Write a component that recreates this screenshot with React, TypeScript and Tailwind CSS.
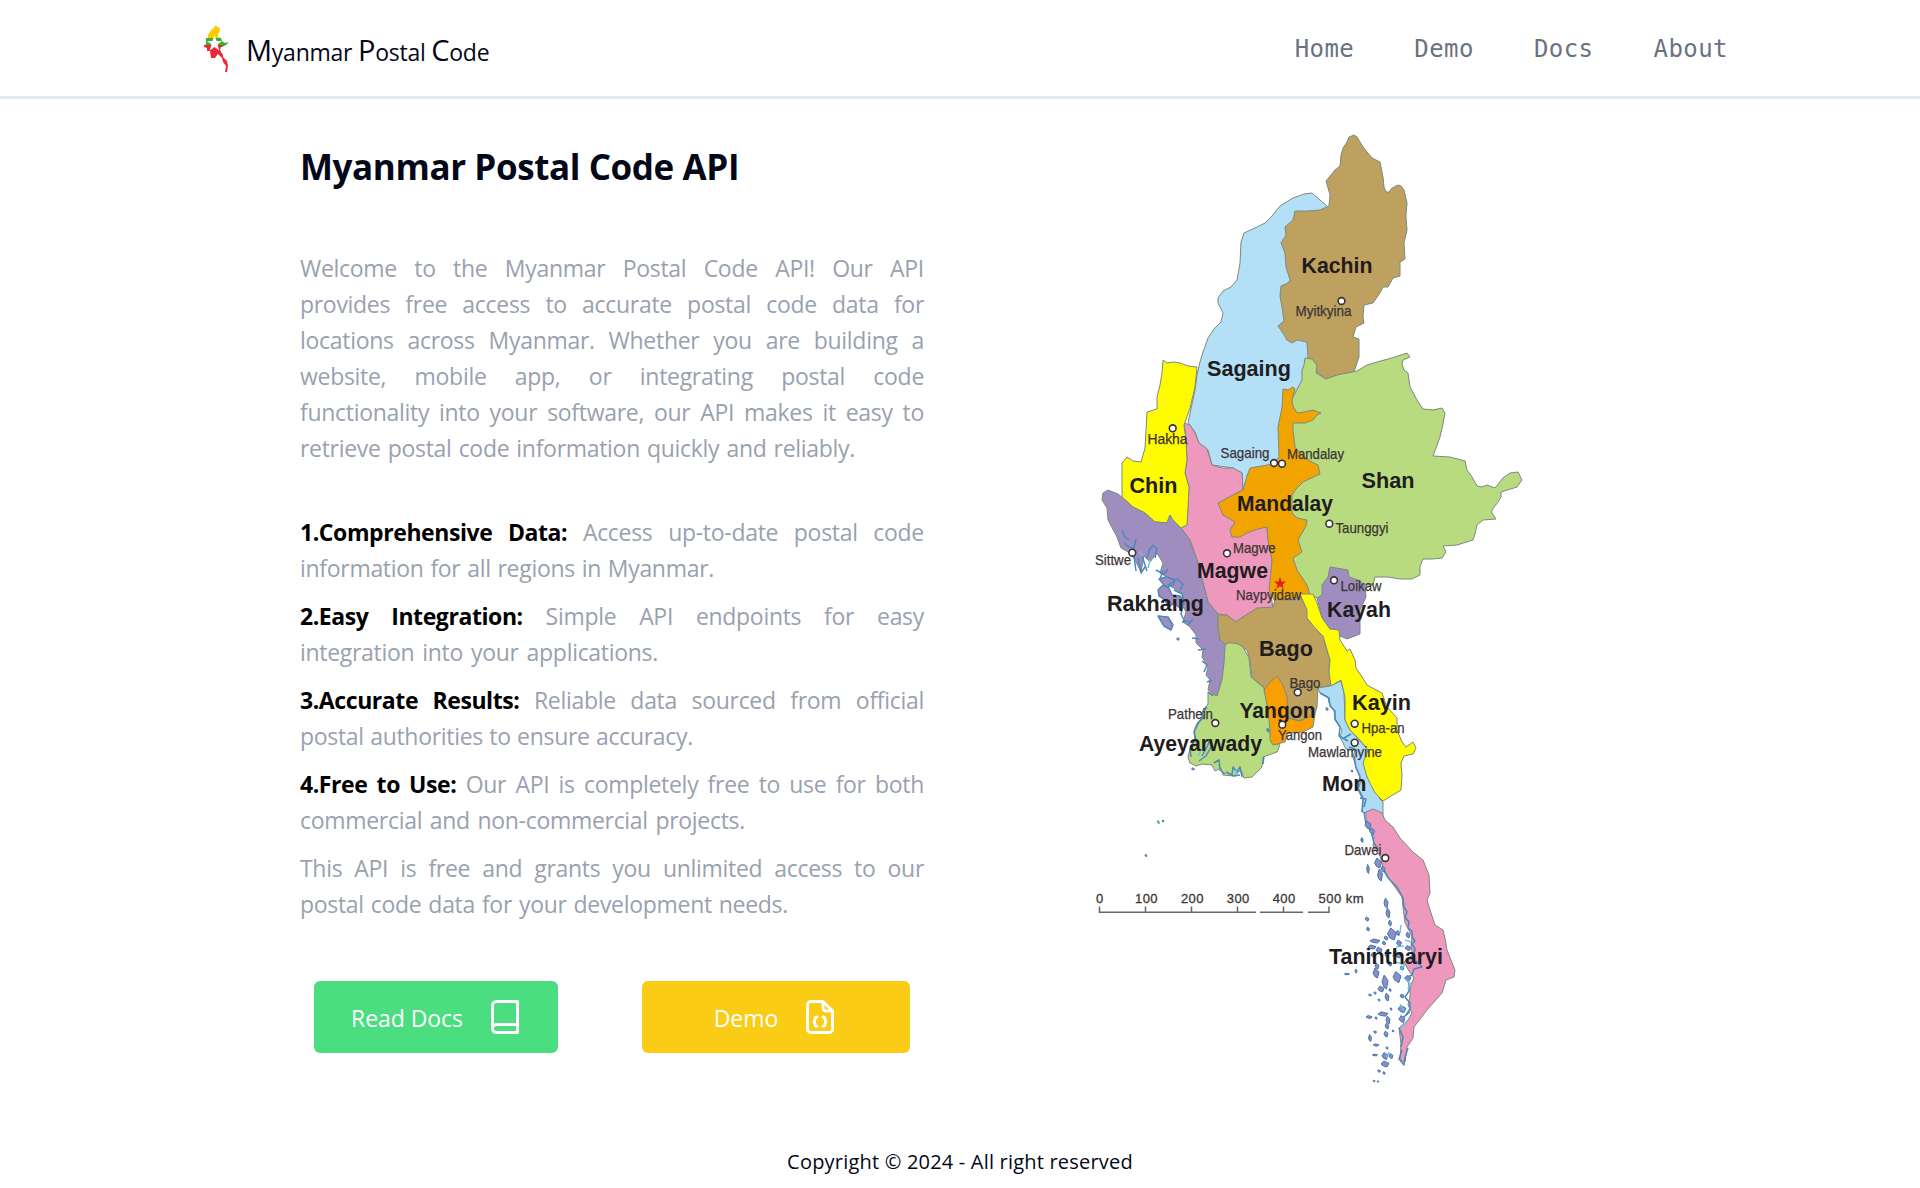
import { type ReactNode } from 'react';

const regions = [
  { name: 'Sagaing', fill: '#b3dff7', points: '1328,207 1320,200 1312,193 1304,194 1293,198 1280,206 1272,216 1265,223 1255,228 1244,233 1241,242 1240,263 1237,280 1231,287 1223,291 1218,298 1218,303 1223,313 1221,322 1214,329 1208,338 1203,352 1200,362 1197,375 1195,390 1188,423 1195,432 1199,443 1208,450 1212,465 1233,468 1242,473 1243,490 1250,480 1270,475 1290,460 1300,400 1320,370 1320,340 1320,212' },
  { name: 'Kachin', fill: '#bea15e', points: '1354,135 1349,137 1347,142 1343,148 1341,155 1340,166 1335,170 1326,181 1328,188 1330,195 1329,206 1320,210 1308,211 1295,211 1293,220 1285,227 1286,235 1281,243 1285,253 1286,267 1290,280 1288,283 1281,286 1280,296 1282,307 1284,321 1278,326 1283,333 1287,340 1292,343 1297,340 1307,342 1308,358 1315,362 1317,372 1326,379 1337,376 1354,372 1359,357 1359,339 1353,337 1356,327 1364,323 1363,317 1364,305 1373,303 1380,293 1383,287 1388,287 1393,278 1400,276 1400,262 1405,259 1404,243 1407,230 1406,216 1407,203 1404,190 1401,186 1398,185 1392,188 1389,192 1386,192 1384,187 1383,177 1380,162 1372,158 1363,147 1357,137' },
  { name: 'Shan', fill: '#b8db80', points: '1305,358 1312,359 1317,365 1316,373 1326,379 1337,375 1357,371 1367,365 1377,362 1395,357 1407,353 1410,357 1403,360 1402,364 1404,370 1408,373 1410,387 1417,400 1423,409 1433,410 1442,408 1445,413 1443,424 1440,437 1433,456 1450,457 1465,461 1467,470 1472,477 1477,486 1482,487 1487,485 1495,488 1503,478 1510,473 1518,472 1522,480 1517,487 1501,492 1501,497 1498,502 1492,510 1492,513 1496,519 1483,520 1477,525 1475,534 1473,540 1457,545 1443,546 1446,552 1442,558 1433,559 1423,559 1420,566 1420,575 1412,579 1400,579 1388,577 1375,577 1373,585 1365,585 1340,590 1318,598 1310,595 1292,570 1288,500 1288,410 1293,397 1302,380 1302,370 1304,365' },
  { name: 'Magwe', fill: '#ee98bd', points: '1184,423 1190,425 1195,433 1199,443 1207,449 1212,465 1222,468 1233,468 1242,473 1243,490 1233,495 1225,502 1245,518 1262,520 1267,527 1268,540 1272,560 1270,587 1273,609 1257,610 1243,617 1236,622 1227,615 1218,614 1208,602 1205,590 1203,583 1197,560 1190,540 1181,528 1187,525 1189,487 1185,473 1187,460 1186,440' },
  { name: 'Mandalay', fill: '#f1a400', points: '1283,389 1288,390 1293,387 1295,389 1292,400 1293,406 1297,413 1304,412 1313,410 1321,413 1317,415 1313,420 1305,423 1293,423 1293,430 1295,447 1302,455 1310,461 1318,465 1320,474 1303,482 1296,489 1292,495 1292,513 1297,518 1307,520 1306,526 1302,533 1298,540 1302,552 1293,558 1297,570 1307,585 1310,595 1300,599 1275,602 1269,590 1272,560 1268,540 1267,527 1258,529 1247,533 1240,537 1232,537 1230,530 1235,522 1223,515 1218,503 1233,495 1243,490 1247,476 1250,468 1273,464 1279,457 1278,427 1282,407' },
  { name: 'Chin', fill: '#fffb00', points: '1163,360 1167,363 1174,362 1180,363 1188,366 1197,367 1195,387 1190,408 1184,425 1186,440 1187,460 1185,473 1189,487 1188,508 1187,525 1181,528 1173,522 1170,515 1167,523 1155,522 1145,513 1133,507 1122,497 1122,463 1127,457 1133,461 1141,462 1145,448 1147,412 1157,409 1157,397 1160,385 1162,373' },
  { name: 'Rakhaing', fill: '#9f8dc0', points: '1108,490 1118,494 1123,498 1133,507 1145,513 1155,522 1167,523 1170,515 1173,520 1181,528 1190,540 1197,560 1203,583 1208,602 1218,614 1218,630 1226,647 1223,673 1217,696 1208,690 1210,680 1206,675 1208,667 1202,657 1203,650 1196,643 1196,635 1190,627 1183,622 1186,612 1181,603 1184,594 1170,586 1172,580 1160,573 1163,563 1157,553 1150,562 1144,556 1141,572 1135,560 1130,553 1121,548 1117,537 1108,520 1107,508 1102,500 1103,493' },
  { name: 'Bago', fill: '#bea15e', points: '1218,615 1227,615 1236,622 1243,617 1257,608 1273,607 1275,600 1300,597 1308,610 1308,620 1323,635 1326,648 1330,660 1329,672 1332,685 1318,688 1317,707 1313,720 1285,722 1263,687 1252,677 1250,660 1247,650 1240,646 1227,645 1220,640 1218,627' },
  { name: 'Ayeyarwady', fill: '#b8db80', points: '1225,646 1228,643 1233,643 1238,644 1243,647 1249,658 1251,677 1264,688 1272,727 1272,743 1280,745 1277,752 1263,757 1262,767 1252,777 1244,778 1241,770 1234,776 1223,775 1221,768 1215,771 1212,765 1202,764 1196,766 1190,763 1188,757 1191,745 1195,740 1194,731 1197,723 1202,718 1203,710 1208,704 1208,692 1217,696 1222,680 1224,663' },
  { name: 'Yangon', fill: '#f99f00', points: '1277,676 1283,685 1287,697 1288,718 1300,721 1315,714 1313,727 1303,732 1287,733 1285,742 1273,745 1270,740 1270,730 1268,710 1264,690 1270,682' },
  { name: 'Kayah', fill: '#9f8dc0', points: '1330,567 1348,570 1349,577 1358,580 1365,585 1366,597 1360,610 1360,634 1347,639 1340,636 1338,630 1327,628 1321,613 1317,598 1322,595 1322,585 1328,577' },
  { name: 'Mon', fill: '#addcf4', points: '1318,688 1330,686 1341,681 1344,693 1345,720 1350,730 1368,750 1367,777 1380,799 1383,802 1383,815 1373,814 1362,812 1363,800 1358,790 1361,780 1357,770 1353,757 1355,750 1346,749 1340,737 1342,730 1335,720 1334,710 1329,703 1328,697 1320,693' },
  { name: 'Kayin', fill: '#fffb00', points: '1300,594 1313,594 1317,603 1322,618 1330,629 1339,630 1340,640 1347,651 1350,649 1355,660 1356,668 1362,677 1367,685 1382,693 1387,707 1397,718 1397,730 1402,742 1406,747 1413,742 1416,748 1413,754 1404,756 1401,763 1402,775 1401,790 1383,801 1375,793 1367,777 1363,763 1368,750 1360,740 1350,730 1345,720 1345,697 1341,680 1331,686 1329,672 1330,660 1323,636 1315,628 1307,618 1307,610' },
  { name: 'Tanintharyi', fill: '#ee98bd', points: '1366,812 1373,809 1382,813 1385,820 1393,827 1400,838 1413,852 1423,860 1429,875 1430,893 1427,900 1431,913 1435,925 1443,930 1445,938 1447,950 1455,970 1454,977 1446,980 1442,993 1427,1010 1414,1027 1413,1038 1407,1047 1405,1062 1400,1060 1401,1044 1399,1028 1408,1020 1412,1013 1408,1005 1410,997 1410,987 1414,978 1409,971 1404,962 1413,956 1411,947 1412,936 1405,923 1403,907 1402,897 1390,880 1383,867 1380,856 1373,847 1374,836 1366,824' },
];

const stateLabels: [string, number, number, number][] = [
  ['Kachin', 1301.5, 273, 71], ['Sagaing', 1207, 376, 84], ['Chin', 1129.5, 492.5, 48],
  ['Mandalay', 1237, 510.5, 96], ['Magwe', 1197, 578, 71], ['Shan', 1361.5, 488, 53],
  ['Rakhaing', 1107, 611, 97], ['Bago', 1259, 656, 54], ['Yangon', 1239.5, 717.5, 76],
  ['Ayeyarwady', 1139, 751, 123], ['Kayah', 1327, 616.5, 64], ['Kayin', 1352, 709.5, 59],
  ['Mon', 1322, 791, 44.5], ['Tanintharyi', 1329, 964, 114],
];

const cityLabels: [string, number, number, number][] = [
  ['Myitkyina', 1295.5, 316, 56], ['Hakha', 1147.5, 444, 40], ['Sagaing', 1220.5, 458, 49],
  ['Mandalay', 1287, 458.5, 57], ['Taunggyi', 1335.5, 532.5, 53], ['Magwe', 1233, 552.5, 42.5],
  ['Sittwe', 1095, 565, 36], ['Naypyidaw', 1236, 600, 65], ['Loikaw', 1340.5, 591, 41],
  ['Bago', 1289.5, 688, 31], ['Pathein', 1168, 718.5, 45], ['Yangon', 1278, 740, 44],
  ['Hpa-an', 1361.5, 732.5, 43], ['Mawlamyine', 1308, 756.5, 74], ['Dawei', 1344.5, 854.5, 37],
];

const cityDots: [number, number][] = [
  [1341.5, 301], [1172.7, 428.3], [1274, 463], [1282, 463.7], [1227, 553.3], [1132.3, 552.7],
  [1329.3, 523.7], [1334, 580.3], [1297.7, 692.3], [1215.3, 723], [1282.3, 724.7],
  [1354.7, 723.7], [1354.7, 742.7], [1385.3, 858],
];

const islets: [number, number, number, number][] = [
  [1386, 903, 2, 5], [1388, 913, 2, 5], [1367, 919, 2, 2], [1368, 929, 1.5, 2], [1390, 923, 1.5, 3],
  [1392, 934, 4.5, 6], [1386, 938, 2, 2], [1398, 933, 2, 2.5], [1399, 943, 2.5, 3], [1375, 941, 5, 2],
  [1372, 947, 4, 2], [1379, 950, 3, 3], [1398, 955, 3, 3], [1387, 954, 2, 4], [1376, 973, 3, 5],
  [1397, 977, 4, 5.5], [1385, 982, 3, 7], [1381, 989, 3, 3], [1387, 997, 2, 4], [1356, 971, 1, 2],
  [1347, 974, 2.5, .8], [1370, 995, 1.5, 1], [1375, 993, 1.2, 1.2], [1379, 1000, 1.2, 1], [1402, 996, 2, 2],
  [1391, 1009, 1, 1.2], [1369, 1017, 3, 1.5], [1376, 1018, 1.2, 1.2], [1383, 1014, 5, 2.2], [1388, 1020, 2, 4],
  [1402, 1009, 4, 3.5], [1402, 1019, 3, 3.5], [1375, 1032, 1.5, 1.2], [1370, 1038, 1.5, 3.5], [1386, 1034, 2, 3],
  [1393, 1031, 1, 1], [1376, 1045, 2.8, 1.2], [1387, 1048, 1.2, 1.2], [1375, 1055, 2.5, .9], [1385, 1056, 3, 3.5],
  [1391, 1056, 2, 2.5], [1385, 1064, 4, 3], [1379, 1071, 1.5, 1.2], [1384, 1073, 1.2, 1.4], [1374, 1081, 1.2, .8],
  [1378, 1081.5, .8, .8], [1362, 840, 1.2, 2.5], [1368, 869, 1.3, 4.5], [1378, 863, 3.5, 5], [1380, 875, 2.5, 6],
  [1383, 869, 2, 3], [1368, 825, 3, 4], [1372, 831, 2.5, 3], [1352, 771, 1, 1], [1327, 709, 1.2, 1.5],
  [1163, 821, 1, .9], [1146, 855.5, 1, 1.2], [1178, 639, 1.3, 1.3], [1193, 769, 1.5, 1], [1268, 730, 1.2, 2],
  [1377, 966, 2, 3], [1384, 943, 1.6, 2], [1373, 955, 2, 2], [1408, 935, 2, 3], [1408, 948, 3, 2.5],
  [1402, 968, 2, 2], [1408, 978, 3, 2.5], [1390, 964, 2, 2], [1387, 1026, 1.8, 3], [1390, 990, 1.2, 1.5],
];

function MyanmarMap() {
  return (
    <svg viewBox="1080 120 460 980" className="h-[980px] w-[460px] shrink-0" fontFamily='"Liberation Sans", Arial, sans-serif' role="img" aria-label="Map of Myanmar">
      <g stroke="#7b8a7e" strokeWidth="1" strokeLinejoin="round">
        {regions.map((r) => <polygon key={r.name} points={r.points} fill={r.fill} />)}
      </g>
      <g fill="#9f8dc0" stroke="#4a88bd" strokeWidth="1.5" strokeLinejoin="round">
        <path d="M1158 590l5-5 6 3 3 7 8 1 4 6-3 7-7-6-5 4-5-8-5-3zM1158 616l10 1 5 8-2 5-7-4zM1159 579l7-2 9 3-2 5-7 2z" />
        <path d="M1122 530l3 7 4 3M1124 543l5 4 5 1 2-9M1134 556l2 15M1138 558l3 15 4-6M1142 556l5 15M1148 552l5-7 4 4-2 9M1150 548l-3 10M1156 570l8 4 4-5M1160 579l3-8M1168 585l9-6 6 5-3 6M1174 590l8 4 2 8-3 12 4 8M1182 622l7-1M1188 625l5-6M1192 638l7 1M1198 650l8-1M1202 661l5 4-3 7M1207 682l5-2M1208 692l5 4" fill="none" />
        <path d="M1191 757l-1-7 3-7 3-3-2-8 5-10 4-4-1-5 5-6M1202 756l5-9 3-7 1 7-5 9-7 5M1214 763l5-3 1 10 5 4M1232 775l1-8 4 5 3-5 2 10M1264 756l-1 8M1226 772l8 4 6-1" fill="none" />
        <path d="M1320 693l9 5 1 8 5 5 0 8 5 8-1 9 9 5M1344 738l7-4M1349 747l6 2M1354 756l2 12 4 8-2 12 5 10-1 14M1360 798l6 1-2 8M1364 812l2 12 5 7 3 12 4 6M1382 868l7 11 8 8 6 11 1 9 3 5-2 5 4 5-1 6 4 3 0 6 3 4-3 3 3 5-1 5-5 4 7 3 6 6-8 2-2 6-7 3 4 5 0 8-4 6 5 6 0 6-4 6" fill="none" />
        <path d="M1410 1012l-9 7M1399 1028l4 9-2 10M1402 1050l-3 9 5 6 1-8 3-9" fill="none" />
      </g>
      <g fill="#8e8cc6" stroke="#4079ae" strokeWidth="1">
        {islets.map(([x, y, rx, ry], i) => <path key={i} d={`M${x - rx} ${y}l${rx * 0.7} ${-ry}l${rx * 0.5} ${ry * 0.3}l${rx * 0.8} ${ry * 0.5}l${-rx * 0.5} ${ry * 1.2}l${-rx * 0.9} ${-ry * 0.3}z`} />)}
        <path d="M1157 821l2 0 0 3z" stroke="#4ea58b" />
      </g>
      <g fill="none" stroke="#72c5df" strokeWidth="1.5">
        <path d="M1401 925l-1 8M1396 947l8-1M1405 940l6 2M1396 962l9 3-5 5M1404 978l6 5-2 6M1400 1004l4 7M1407 1022l-6 6M1389 1052l-2 6M1394 951l-1 6M1198 756l4-7M1235 770l3 5M1150 560l-2 8M1139 552l4 4" />
      </g>
      <g fill="#211c1d" fontSize="21.5" fontWeight="700">
        {stateLabels.map(([name, x, y, w]) => <text key={name} x={x} y={y} textLength={w} lengthAdjust="spacingAndGlyphs">{name}</text>)}
      </g>
      <g fill="#3b3536" stroke="#3b3536" strokeWidth=".25" fontSize="14.2">
        {cityLabels.map(([name, x, y, w]) => <text key={name + x} x={x} y={y} textLength={w} lengthAdjust="spacingAndGlyphs">{name}</text>)}
      </g>
      <g fill="#fff" stroke="#383435" strokeWidth="1.6">
        {cityDots.map(([x, y]) => <circle key={`${x}-${y}`} cx={x} cy={y} r="3.4" />)}
      </g>
      <path d="M1280 577l1.600 4.500 4.500.1-3.500 2.800 1.200 4.400-3.800-2.600-3.800 2.600 1.200-4.400-3.500-2.800 4.500-.1z" fill="#e02418" />
      <path d="M1099.500 906.500v5.800h156.500M1260 912.300h43M1308 912.300h21v-5.800M1145.500 906.500v5.800M1191.500 906.500v5.800M1237.500 906.500v5.800M1283.500 906.500v5.800" fill="none" stroke="#666" strokeWidth="1.500" />
      <g fill="#3b3536" stroke="#3b3536" strokeWidth=".3" fontSize="13">
        <text x="1096" y="903">0</text>
        {[100, 200, 300, 400].map((n, i) => <text key={n} x={1135 + i * 45.9} y="903" textLength="22.5">{n}</text>)}
        <text x="1318.500" y="903" textLength="45">500 km</text>
      </g>
    </svg>
  );
}

function Logo() {
  return (
    <svg viewBox="203 23 27 49" className="h-[49px] w-[27px]" aria-hidden="true">
      <path d="M216 24l1 2 2 0 1 4-2 3 0 3 3 1-13 1 0-4 3-5 3-2 1-2z" fill="#fecb00" />
      <path d="M206 37h15l1 3 3 2 4-1-3 3-4 2H205l1-4z" fill="#34b233" />
      <path d="M204 44h20l-3 2-1 3 3 5 0 2 4 4 1 5-1 6h-2l1-6-3-4-1-4-4-4-1 1-2 3-4 0-1-7-3 0 0-3-3-1z" fill="#ea2839" />
      <path d="M214.500 34l2 6h5.500l-4.500 3.600 1.800 5.900-4.800-3.500-4.800 3.500 1.800-5.900L207 40h5.500z" fill="#fff" />
    </svg>
  );
}

function Line({ children, w = 'w-full' }: { children: ReactNode; w?: string }) {
  return <span className={`block whitespace-nowrap [text-align-last:justify] ${w}`}>{children}</span>;
}

const features = [
  { title: '1.Comprehensive Data:', rest: 'Access up-to-date postal code', end: 'information for all regions in Myanmar.', w: 'w-[414px]' },
  { title: '2.Easy Integration:', rest: 'Simple API endpoints for easy', end: 'integration into your applications.', w: 'w-[358px]' },
  { title: '3.Accurate Results:', rest: 'Reliable data sourced from official', end: 'postal authorities to ensure accuracy.', w: 'w-[393px]' },
  { title: '4.Free to Use:', rest: 'Our API is completely free to use for both', end: 'commercial and non-commercial projects.', w: 'w-[445px]' },
];

export default function App() {
  return (
    <div className="flex h-[1188px] flex-col overflow-hidden bg-white font-['Segoe_UI','Open_Sans',sans-serif] text-[#020817]">
      <header className="h-[99px] border-b-[3px] border-slate-200">
        <div className="mx-auto flex h-24 w-[1536px] items-center justify-between pl-[11px]">
          <div className="flex items-center gap-4">
            <Logo />
            <div className="pt-1.5 text-[23px] leading-9 tracking-[-0.25px] whitespace-nowrap">
              <span className="text-[29px]">M</span>yanmar <span className="text-[29px]">P</span>ostal <span className="text-[29px]">C</span>ode
            </div>
          </div>
          <nav className="flex gap-[60px] pt-0.5 font-['DejaVu_Sans_Mono',monospace] text-2xl tracking-[0.45px] text-gray-500">
            <a>Home</a><a>Demo</a><a>Docs</a><a>About</a>
          </nav>
        </div>
      </header>
      <main className="flex h-[1021px]">
        <section className="ml-[300px] w-[624px] shrink-0 pt-12 text-[23px] leading-9 tracking-[-0.3px] text-gray-400">
          <h1 className="text-[35px] leading-10 font-bold tracking-[-0.4px] whitespace-nowrap text-[#020817]">Myanmar Postal Code API</h1>
          <p className="mt-[63px]">
            <Line>Welcome to the Myanmar Postal Code API! Our API</Line>
            <Line>provides free access to accurate postal code data for</Line>
            <Line>locations across Myanmar. Whether you are building a</Line>
            <Line>website, mobile app, or integrating postal code</Line>
            <Line>functionality into your software, our API makes it easy to</Line>
            <Line w="w-[555px]">retrieve postal code information quickly and reliably.</Line>
          </p>
          <ul className="mt-12 flex flex-col gap-3">
            {features.map((f) => (
              <li key={f.title}>
                <Line><b className="font-bold tracking-[-0.42px] text-black">{f.title}</b> {f.rest}</Line>
                <Line w={f.w}>{f.end}</Line>
              </li>
            ))}
            <li>
              <Line>This API is free and grants you unlimited access to our</Line>
              <Line w="w-[488px]">postal code data for your development needs.</Line>
            </li>
          </ul>
          <div className="mt-[59px] flex justify-between px-[14px] tracking-[-0.05px] text-white">
            <button className="flex h-[72px] w-[244px] items-center justify-center gap-7 rounded-md bg-[#4ade80] pr-0.5">
              <span className="pt-0.5">Read Docs</span>
              <svg viewBox="0 0 28 34" className="h-[34px] w-7" fill="none" stroke="currentColor" strokeWidth="3" strokeLinejoin="round">
                <path d="M5.500 1.500h21v31h-21a4 4 0 0 1-4-4v-23a4 4 0 0 1 4-4zM1.500 28.500a4 4 0 0 1 4-4h21" />
              </svg>
            </button>
            <button className="flex h-[72px] w-[268px] items-center justify-center gap-7 rounded-md bg-[#facc15] pr-1">
              <span className="pt-0.5">Demo</span>
              <svg viewBox="0 0 28 34" className="h-[34px] w-7" fill="none" stroke="currentColor" strokeWidth="2.900" strokeLinecap="round" strokeLinejoin="round">
                <path d="M17 1.500H5a3.500 3.500 0 0 0-3.500 3.500v24a3.500 3.500 0 0 0 3.500 3.500h18a3.500 3.500 0 0 0 3.500-3.500V11zM17 1.500V8a3 3 0 0 0 3 3h6.500M11 17c-3.500 0-1 3-3 4.700 2 1.700-.500 4.700 3 4.700M17 17c3.500 0 1 3 3 4.700-2 1.700.500 4.700-3 4.700" />
              </svg>
            </button>
          </div>
        </section>
        <div className="ml-[156px] pt-[21px]"><MyanmarMap /></div>
      </main>
      <footer className="flex justify-center pt-7 text-[20px] leading-7 tracking-[0.2px] whitespace-nowrap">Copyright © 2024 - All right reserved</footer>
    </div>
  );
}
